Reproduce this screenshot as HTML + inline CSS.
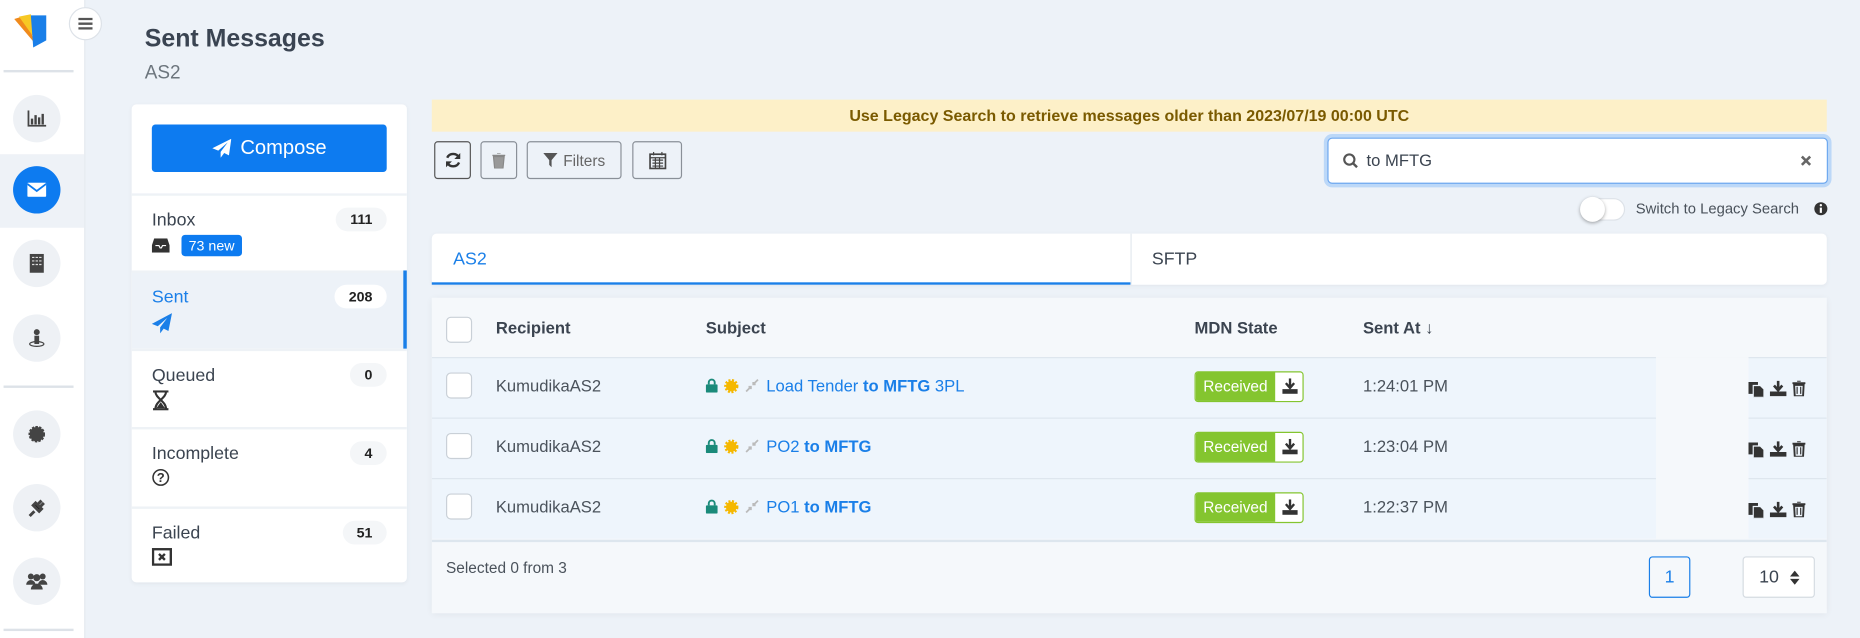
<!DOCTYPE html>
<html><head><meta charset="utf-8">
<style>
*{box-sizing:border-box;margin:0;padding:0}
html,body{width:1860px;height:638px;overflow:hidden;background:#edf2f8;font-family:"Liberation Sans",sans-serif}
#w{position:absolute;left:0;top:0;width:1568px;height:538px;transform:scale(1.18622);transform-origin:0 0;color:#3b4450}
.a{position:absolute}
.side{left:0;top:0;width:72px;height:538px;background:#fff;border-right:1px solid #e3e8ee}
.sep{left:3px;width:59px;height:2px;background:#dde2e8}
.ic{left:11px;width:40px;height:40px;border-radius:50%;background:#eef1f5;display:flex;align-items:center;justify-content:center}
.card{background:#fff;border-radius:4px;box-shadow:0 1px 4px rgba(0,0,0,.05)}
.item{left:0;width:232px;border-top:2px solid #eef2f6;padding:12px 17px}
.item .t{font-size:15px;color:#3b4450}
.cnt{position:absolute;right:17px;top:10px;background:#f4f6f8;border-radius:10px;font-size:12px;font-weight:bold;padding:3px 12px;color:#222}
.btn{top:119px;height:32px;border:1px solid #8a9098;border-radius:3px;display:flex;align-items:center;justify-content:center;background:#edf2f8}
.row{left:0;width:1176px;height:51px;border-top:1px solid #dde6ee;background:#eef5fc}
.cb{position:absolute;left:12px;width:22px;height:22px;border:1px solid #c9d0d7;border-radius:4px;background:#fff}
.c{position:absolute;font-size:14px}
.rec{left:54px;color:#4a525b}
.sub{left:231px;color:#1a7fe8;display:flex;align-items:center;gap:5px}
.badge{position:absolute;left:643px;width:92px;height:26px;border:1px solid #84c52f;border-radius:3px;background:#fff;overflow:hidden}
.badge span{position:absolute;left:0;top:0;width:67px;height:24px;background:#84c52f;color:#fff;font-size:13px;line-height:24px;text-align:center}
.tm{left:785px;color:#4a525b}
.acts{position:absolute;left:1110px;display:flex;gap:5px}
</style></head><body><div id="w">
<div class="a side">
 <svg class="a" style="left:11px;top:9px" width="30" height="32" viewBox="0 0 30 32"><path d="M1 7l10-3 7 23z" fill="#f08a1c"/><path d="M5 5l10-2 5 23z" fill="#f7c824"/><path d="M15 4h13v21l-11 6z" fill="#1a7fe8"/></svg>
 <div class="a" style="left:58px;top:6px;width:28px;height:28px;border-radius:50%;background:#fff;border:1px solid #dde2e8;display:flex;align-items:center;justify-content:center"><svg width="12" height="10"><path d="M0 1h12M0 5h12M0 9h12" stroke="#555" stroke-width="2"/></svg></div>
 <div class="a sep" style="top:59px"></div>
 <div class="a ic" style="top:80px"><svg width="16" height="14"><path d="M1 0v13h15" stroke="#444" fill="none" stroke-width="1.5"/><path d="M4 7v5M7 4v8M10 6v6M13 3v9" stroke="#444" stroke-width="2"/></svg></div>
 <div class="a" style="left:0;top:130px;width:71px;height:62px;background:#eef2f7"></div>
 <div class="a ic" style="top:140px;background:#0d7bf0"><svg width="16" height="12"><rect width="16" height="12" rx="1" fill="#fff"/><path d="M0 1l8 6 8-6" stroke="#0d7bf0" stroke-width="1.5" fill="none"/></svg></div>
 <div class="a ic" style="top:202px"><svg width="12" height="16"><rect width="12" height="16" fill="#444"/><path d="M2 3h2M5 3h2M8 3h2M2 6h2M5 6h2M8 6h2M2 9h2M5 9h2M8 9h2" stroke="#ddd"/></svg></div>
 <div class="a ic" style="top:265px"><svg width="14" height="16"><circle cx="7" cy="3" r="2.5" fill="#444"/><rect x="5" y="6" width="4" height="7" fill="#444"/><ellipse cx="7" cy="13" rx="6" ry="2" stroke="#444" fill="none"/></svg></div>
 <div class="a sep" style="top:325px"></div>
 <div class="a ic" style="top:346px"><svg width="14" height="14"><circle cx="7" cy="7" r="6" fill="#444" stroke="#444" stroke-width="2" stroke-dasharray="2 1"/></svg></div>
 <div class="a ic" style="top:408px"><svg width="16" height="16"><path d="M2 15l4-4M5 6l5 5 2-2-5-5zM9 5l3-3M11 7l3-3" stroke="#444" stroke-width="2.5"/></svg></div>
 <div class="a ic" style="top:470px"><svg width="18" height="14"><circle cx="4" cy="3" r="2.5" fill="#444"/><circle cx="14" cy="3" r="2.5" fill="#444"/><circle cx="9" cy="4" r="3" fill="#444"/><path d="M0 10a4 4 0 0 1 8 0zM10 10a4 4 0 0 1 8 0zM4 14a5 5 0 0 1 10 0z" fill="#444"/></svg></div>
 <div class="a sep" style="top:530px"></div>
</div>
<div class="a" style="left:122px;top:21px;font-size:21px;font-weight:bold;color:#3a4452">Sent Messages</div>
<div class="a" style="left:122px;top:53px;font-size:16px;color:#6c757d">AS2</div>
<div class="a card" style="left:111px;top:88px;width:232px;height:403px;overflow:hidden">
 <div class="a" style="left:17px;top:17px;width:198px;height:40px;background:#0d7bf0;border-radius:3px;color:#fff;font-size:17px;display:flex;align-items:center;justify-content:center;gap:8px"><svg width="16" height="16"><path d="M16 0L0 8l5 2 8-7-6 8v5l3-4 4 2z" fill="#fff"/></svg>Compose</div>
 <div class="a item" style="top:75px;height:65px"><div class="t">Inbox</div><div class="cnt">111</div><div style="display:flex;align-items:center;gap:10px;margin-top:4px"><svg width="15" height="12"><path d="M2 0h11l2 6v6H0V6z" fill="#333"/><path d="M3 6h3l1 2h1l1-2h3" stroke="#fff" fill="none"/></svg><span style="background:#0d7bf0;color:#fff;font-size:12px;padding:2px 6px;border-radius:3px">73 new</span></div></div>
 <div class="a item" style="top:140px;height:66px;background:#edf2f8"><div class="t" style="color:#1a7fe8">Sent</div><div class="cnt" style="background:#fff">208</div><svg style="margin-top:5px" width="17" height="17"><path d="M17 0L0 9l5 2 8-7-6 8v5l3-4 4 2z" fill="#1a7fe8"/></svg></div>
 <div class="a" style="left:229px;top:140px;width:3px;height:66px;background:#1a7fe8"></div>
 <div class="a item" style="top:206px;height:66px"><div class="t">Queued</div><div class="cnt">0</div><svg style="margin-top:4px" width="15" height="17"><path d="M1 1h13M1 16h13M3 1c0 6 9 8 9 15M12 1c0 6-9 8-9 15" stroke="#333" stroke-width="1.8" fill="none"/><path d="M4 15l3.5-5 3.5 5z" fill="#333"/></svg></div>
 <div class="a item" style="top:272px;height:67px"><div class="t">Incomplete</div><div class="cnt">4</div><svg style="margin-top:4px" width="15" height="15"><circle cx="7.5" cy="7.5" r="6.5" stroke="#333" stroke-width="1.3" fill="none"/><text x="7.5" y="11.5" font-size="11" font-weight="bold" text-anchor="middle" fill="#333" font-family="Liberation Sans">?</text></svg></div>
 <div class="a item" style="top:339px;height:64px"><div class="t">Failed</div><div class="cnt">51</div><svg style="margin-top:4px" width="17" height="15"><rect x="1" y="1" width="15" height="13" stroke="#333" stroke-width="2" fill="none"/><path d="M6 5l5 5M11 5l-5 5" stroke="#333" stroke-width="2"/></svg></div>
</div>
<div class="a" style="left:364px;top:84px;width:1176px;height:27px;background:#fdf0c8;color:#7a5a00;font-size:13.5px;font-weight:bold;text-align:center;line-height:27px">Use Legacy Search to retrieve messages older than 2023/07/19 00:00 UTC</div>
<div class="a btn" style="left:366px;width:31px;border-color:#555"><svg width="14" height="14"><path d="M12 5A5.5 5.5 0 0 0 2 5M2 9a5.5 5.5 0 0 0 10 0" stroke="#333" stroke-width="2" fill="none"/><path d="M13 1v5H8zM1 13V8h5z" fill="#333"/></svg></div>
<div class="a btn" style="left:405px;width:31px"><svg width="11" height="13"><path d="M0 2h11M4 0h3M1 3h9l-1 10H2z" stroke="#888" fill="#999"/></svg></div>
<div class="a btn" style="left:444px;width:80px;font-size:13px;color:#666;gap:5px"><svg width="12" height="12"><path d="M0 0h12L7 6v6L5 10V6z" fill="#555"/></svg>Filters</div>
<div class="a btn" style="left:533px;width:42px"><svg width="15" height="15"><rect x="1" y="2" width="13" height="12" stroke="#444" fill="none" stroke-width="1.4"/><path d="M1 5h13M4 0v3M11 0v3M3 7h9M3 9.5h9M3 12h9M5.5 5v9M9 5v9" stroke="#444" stroke-width="1"/></svg></div>
<div class="a" style="left:1119px;top:116px;width:422px;height:39px;border:1.5px solid #6ea8ef;box-shadow:0 0 0 3px #bcd8f8;border-radius:4px;background:#fff"></div>
<svg class="a" style="left:1132px;top:129px" width="13" height="13"><circle cx="5.5" cy="5.5" r="4.3" stroke="#555" stroke-width="1.8" fill="none"/><path d="M8.5 8.5l3.5 3.5" stroke="#555" stroke-width="2"/></svg>
<div class="a" style="left:1152px;top:127px;font-size:14px;color:#3b4450">to MFTG</div>
<svg class="a" style="left:1518px;top:131px" width="9" height="9"><path d="M1 1l7 7M8 1l-7 7" stroke="#666" stroke-width="2.2"/></svg>
<div class="a" style="left:1333px;top:167px;width:37px;height:19px;border-radius:10px;background:#fff;border:1px solid #dde2e8"></div>
<div class="a" style="left:1332px;top:166px;width:21px;height:21px;border-radius:50%;background:#fff;box-shadow:0 1px 3px rgba(0,0,0,.35)"></div>
<div class="a" style="left:1379px;top:169px;font-size:12.5px;color:#4a525b">Switch to Legacy Search</div>
<svg class="a" style="left:1529px;top:170px" width="12" height="12"><circle cx="6" cy="6" r="5.5" fill="#333"/><path d="M6 5v4.5" stroke="#fff" stroke-width="1.8"/><circle cx="6" cy="3" r="1" fill="#fff"/></svg>
<div class="a card" style="left:364px;top:197px;width:1176px;height:43px">
 <div class="a" style="left:0;top:41px;width:589px;height:2px;background:#1a7fe8"></div>
 <div class="a" style="left:589px;top:0;width:1px;height:43px;background:#e3e8ee"></div>
 <div class="a" style="left:18px;top:13px;font-size:15px;color:#1a7fe8">AS2</div>
 <div class="a" style="left:607px;top:13px;font-size:15px;color:#3b4450">SFTP</div>
</div>
<div class="a" style="left:364px;top:251px;width:1176px;height:266px;background:#f5f8fb;box-shadow:0 1px 6px rgba(0,0,0,.06);overflow:hidden">
 <div class="cb" style="top:16px"></div>
 <div class="c" style="left:54px;top:17px;font-weight:bold;color:#3b4450">Recipient</div>
 <div class="c" style="left:231px;top:17px;font-weight:bold;color:#3b4450">Subject</div>
 <div class="c" style="left:643px;top:17px;font-weight:bold;color:#3b4450">MDN State</div>
 <div class="c" style="left:785px;top:17px;font-weight:bold;color:#3b4450">Sent At ↓</div>
 <div class="a row" style="top:50px"></div><div class="a row" style="top:101px"></div><div class="a row" style="top:152px"></div>
 <div class="a" style="left:1032px;top:50px;width:78px;height:154px;background:#f5f8fb"></div>
 <div class="a" style="left:0;top:204px;width:1176px;height:2px;background:#dde6ee"></div>
 <div class="a" style="left:0;top:50px;width:1176px;height:51px">
  <div class="cb" style="top:13px"></div><div class="c rec" style="top:16px">KumudikaAS2</div>
  <div class="c sub" style="top:16px"><svg width="10" height="12"><path d="M2.5 5V3.5a2.5 2.5 0 0 1 5 0V5" stroke="#1a8a7a" stroke-width="1.6" fill="none"/><rect y="5" width="10" height="7" rx="1" fill="#1a8a7a"/></svg><svg width="13" height="13"><circle cx="6.5" cy="6.5" r="4.5" fill="#f5b800" stroke="#f5b800" stroke-width="3" stroke-dasharray="1.5 1.2"/></svg><svg width="12" height="12"><path d="M1 11l4-4M11 1L7 5M3 7h2v2M9 5H7V3" stroke="#bbb" stroke-width="1.5" fill="none"/></svg><span style="margin-left:1px">Load Tender <b>to MFTG</b> 3PL</span></div>
  <div class="badge" style="top:12px"><span>Received</span><svg style="position:absolute;left:73px;top:5px" width="13" height="13"><path d="M6.5 0v7M3 4l3.5 4 3.5-4" stroke="#333" stroke-width="2" fill="none"/><path d="M0 9h13v4H0z" fill="#333"/></svg></div>
  <div class="c tm" style="top:16px">1:24:01 PM</div>
  <div class="acts" style="top:20px"><svg width="13" height="14"><path d="M0 1h8v10H0z" fill="#333"/><path d="M4 4h6l3 3v7H4z" fill="#333" stroke="#eef5fc"/></svg><svg width="14" height="13"><path d="M7 0v7M3.5 4L7 8l3.5-4" stroke="#333" stroke-width="2.2" fill="none"/><path d="M0 9h14v4H0z" fill="#333"/></svg><svg width="11" height="13"><path d="M0 2h11M4 0h3M1.5 3.5h8l-.5 9.5h-7z" stroke="#333" stroke-width="1.6" fill="none"/><path d="M4 5v6M7 5v6" stroke="#333"/></svg></div>
 </div>
 <div class="a" style="left:0;top:101px;width:1176px;height:51px">
  <div class="cb" style="top:13px"></div><div class="c rec" style="top:16px">KumudikaAS2</div>
  <div class="c sub" style="top:16px"><svg width="10" height="12"><path d="M2.5 5V3.5a2.5 2.5 0 0 1 5 0V5" stroke="#1a8a7a" stroke-width="1.6" fill="none"/><rect y="5" width="10" height="7" rx="1" fill="#1a8a7a"/></svg><svg width="13" height="13"><circle cx="6.5" cy="6.5" r="4.5" fill="#f5b800" stroke="#f5b800" stroke-width="3" stroke-dasharray="1.5 1.2"/></svg><svg width="12" height="12"><path d="M1 11l4-4M11 1L7 5M3 7h2v2M9 5H7V3" stroke="#bbb" stroke-width="1.5" fill="none"/></svg><span style="margin-left:1px">PO2 <b>to MFTG</b></span></div>
  <div class="badge" style="top:12px"><span>Received</span><svg style="position:absolute;left:73px;top:5px" width="13" height="13"><path d="M6.5 0v7M3 4l3.5 4 3.5-4" stroke="#333" stroke-width="2" fill="none"/><path d="M0 9h13v4H0z" fill="#333"/></svg></div>
  <div class="c tm" style="top:16px">1:23:04 PM</div>
  <div class="acts" style="top:20px"><svg width="13" height="14"><path d="M0 1h8v10H0z" fill="#333"/><path d="M4 4h6l3 3v7H4z" fill="#333" stroke="#eef5fc"/></svg><svg width="14" height="13"><path d="M7 0v7M3.5 4L7 8l3.5-4" stroke="#333" stroke-width="2.2" fill="none"/><path d="M0 9h14v4H0z" fill="#333"/></svg><svg width="11" height="13"><path d="M0 2h11M4 0h3M1.5 3.5h8l-.5 9.5h-7z" stroke="#333" stroke-width="1.6" fill="none"/><path d="M4 5v6M7 5v6" stroke="#333"/></svg></div>
 </div>
 <div class="a" style="left:0;top:152px;width:1176px;height:51px">
  <div class="cb" style="top:13px"></div><div class="c rec" style="top:16px">KumudikaAS2</div>
  <div class="c sub" style="top:16px"><svg width="10" height="12"><path d="M2.5 5V3.5a2.5 2.5 0 0 1 5 0V5" stroke="#1a8a7a" stroke-width="1.6" fill="none"/><rect y="5" width="10" height="7" rx="1" fill="#1a8a7a"/></svg><svg width="13" height="13"><circle cx="6.5" cy="6.5" r="4.5" fill="#f5b800" stroke="#f5b800" stroke-width="3" stroke-dasharray="1.5 1.2"/></svg><svg width="12" height="12"><path d="M1 11l4-4M11 1L7 5M3 7h2v2M9 5H7V3" stroke="#bbb" stroke-width="1.5" fill="none"/></svg><span style="margin-left:1px">PO1 <b>to MFTG</b></span></div>
  <div class="badge" style="top:12px"><span>Received</span><svg style="position:absolute;left:73px;top:5px" width="13" height="13"><path d="M6.5 0v7M3 4l3.5 4 3.5-4" stroke="#333" stroke-width="2" fill="none"/><path d="M0 9h13v4H0z" fill="#333"/></svg></div>
  <div class="c tm" style="top:16px">1:22:37 PM</div>
  <div class="acts" style="top:20px"><svg width="13" height="14"><path d="M0 1h8v10H0z" fill="#333"/><path d="M4 4h6l3 3v7H4z" fill="#333" stroke="#eef5fc"/></svg><svg width="14" height="13"><path d="M7 0v7M3.5 4L7 8l3.5-4" stroke="#333" stroke-width="2.2" fill="none"/><path d="M0 9h14v4H0z" fill="#333"/></svg><svg width="11" height="13"><path d="M0 2h11M4 0h3M1.5 3.5h8l-.5 9.5h-7z" stroke="#333" stroke-width="1.6" fill="none"/><path d="M4 5v6M7 5v6" stroke="#333"/></svg></div>
 </div>
 <div class="c" style="left:12px;top:220px;font-size:13px;color:#4a525b">Selected 0 from 3</div>
 <div class="a" style="left:1026px;top:218px;width:35px;height:35px;border:1px solid #1a7fe8;border-radius:3px;color:#1a7fe8;font-size:15px;text-align:center;line-height:33px">1</div>
 <div class="a" style="left:1105px;top:218px;width:61px;height:35px;border:1px solid #d5dbe1;border-radius:3px;background:#fff;font-size:15px;line-height:33px;padding-left:13px">10 <svg style="position:absolute;left:39px;top:11px" width="8" height="12"><path d="M0 5l4-5 4 5zM0 7l4 5 4-5z" fill="#333"/></svg></div>
</div>
</div></body></html>
